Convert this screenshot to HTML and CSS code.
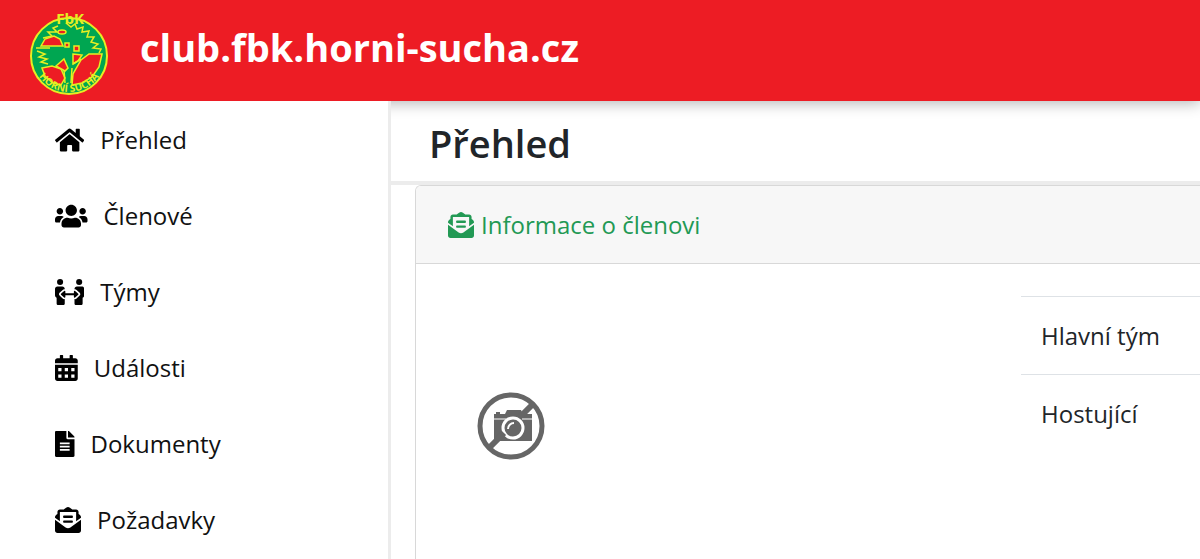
FILE: index.html
```html
<!DOCTYPE html>
<html lang="cs">
<head>
  <meta charset="UTF-8">
  <meta name="viewport" content="width=device-width, initial-scale=1">
  <title>club.fbk.horni-sucha.cz</title>
  <link rel="stylesheet" href="styles.css">
</head>
<body>
  <svg class="sprite" aria-hidden="true">
    <symbol id="envelope" viewBox="0 0 512 512">
      <rect x="160" y="168" width="192" height="48" rx="16"/>
      <rect x="160" y="264" width="192" height="48" rx="16"/>
      <path d="M256 417c-16 0-33-5-47-15L0 251v213c0 26 22 48 48 48h416c26 0 48-22 48-48V251L303 402c-14 10-31 15-47 15zM494 163c-9-7-18-14-30-23V96c0-26-22-48-48-48h-78l-9-7C313 29 279 0 256 0s-56 29-73 41l-9 7H96c-26 0-48 22-48 48v44c-12 9-21 16-30 23A48 48 0 0 0 0 201v10l96 70V96h320v185l96-70v-10c0-15-7-29-18-38z"/>
    </symbol>
  </svg>

  <header class="topbar">
    <svg class="logo" viewBox="0 0 84 90" role="img" aria-label="FbK Horní Suchá">
      <path id="arc" d="M4 47a37 37 0 0 0 74 0" fill="none"/>
      <circle class="green" cx="41" cy="48" r="38"/>
      <g class="red">
        <path d="M13 38l4-7 9-3 6 3 3 7z"/>
        <path d="M14 60l10-2 9 3 4 9-4 7-8-2-8-7z"/>
        <path d="M28 58l8-7 4 9-3 3z"/>
        <path d="M74 46l-3 13-7 10-10 6-10 2 1-11 8-14 8-6z"/>
        <path d="M45 46l9 1-4 6-5 3z"/>
        <path d="M37 35h4v4h-4zM46 38h5v5h-5z"/>
        <ellipse cx="34" cy="24" rx="4" ry="2"/>
      </g>
      <g class="leaves">
        <path d="M38 15l5 4 4-3 2 5 6-2-1 5 7-1-2 6 7 0-3 5 7 2-5 4 8 1-2 4"/>
        <path d="M30 18l-5 2 4 4-9 0 4 4-9 2"/>
        <path d="M8 40h14M9 43l8 3-6 3 8 2-6 3 7 2M45 56l8-5M36 62l1 13M44 60l-1 15"/>
      </g>
      <text class="logo-ring"><textPath href="#arc" startOffset="50%">HORNÍ SUCHÁ</textPath></text>
      <text class="logo-top" x="42" y="16">FbK</text>
    </svg>
    <a class="brand" href="#">club.fbk.horni-sucha.cz</a>
  </header>

  <div class="layout">
    <nav class="sidebar">
      <a href="#">
        <svg class="icon" viewBox="0 0 576 512"><path d="M280 148L96 300v164a16 16 0 0 0 16 16h112a16 16 0 0 0 16-16v-96a16 16 0 0 1 16-16h64a16 16 0 0 1 16 16v96a16 16 0 0 0 16 16h112a16 16 0 0 0 16-16V300L296 148a12 12 0 0 0-16 0zM572 251l-84-68V44a12 12 0 0 0-12-12h-56a12 12 0 0 0-12 12v73l-90-74a48 48 0 0 0-61 0L4 251a12 12 0 0 0-1 17l25 31a12 12 0 0 0 17 2l235-194a12 12 0 0 1 16 0l235 194a12 12 0 0 0 17-2l25-31a12 12 0 0 0-1-17z"/></svg>
        <span>Přehled</span>
      </a>
      <a href="#">
        <svg class="icon" viewBox="0 0 640 512"><path d="M96 224c35 0 64-29 64-64s-29-64-64-64-64 29-64 64 29 64 64 64zm448 0c35 0 64-29 64-64s-29-64-64-64-64 29-64 64 29 64 64 64zm32 32h-64c-18 0-34 7-45 19 40 22 69 62 75 109h66c18 0 32-14 32-32v-32c0-35-29-64-64-64zm-256 0c62 0 112-50 112-112S382 32 320 32 208 82 208 144s50 112 112 112zm77 32h-8c-21 10-44 16-69 16s-48-6-69-16h-8c-63 0-115 52-115 115v29c0 26 22 48 48 48h288c26 0 48-22 48-48v-29c0-63-52-115-115-115zm-224-13c-11-12-27-19-45-19H64c-35 0-64 29-64 64v32c0 18 14 32 32 32h66c6-47 35-87 75-109z"/></svg>
        <span>Členové</span>
      </a>
      <a href="#">
        <svg class="icon" viewBox="0 0 576 512">
          <circle cx="100" cy="60" r="60"/>
          <circle cx="476" cy="60" r="60"/>
          <path d="M48 148h96c27 0 48 21 48 48v8c-14-4-30 0-41 11l-61 58c-16 15-16 39 0 54l61 58c11 11 27 15 41 11v84c0 18-14 32-32 32H64c-18 0-32-14-32-32V368c-20-10-32-26-32-48V196c0-27 21-48 48-48z"/>
          <path d="M528 148h-96c-27 0-48 21-48 48v8c14-4 30 0 41 11l61 58c16 15 16 39 0 54l-61 58c-11 11-27 15-41 11v84c0 18 14 32 32 32h96c18 0 32-14 32-32V368c20-10 32-26 32-48V196c0-27-21-48-48-48z"/>
          <path d="M118 291l62-56c10-9 24-3 24 10v34h168v-34c0-13 14-19 24-10l62 56c5 5 5 13 0 18l-62 56c-10 9-24 3-24-10v-34H204v34c0 13-14 19-24 10l-62-56c-5-5-5-13 0-18z"/>
        </svg>
        <span>Týmy</span>
      </a>
      <a href="#">
        <svg class="icon" viewBox="0 0 448 512"><path fill-rule="evenodd" d="M0 192h448v272c0 26-22 48-48 48H48c-26 0-48-22-48-48zM64 256v64h64v-64zm128 0v64h64v-64zm128 0v64h64v-64zM64 384v64h64v-64zm128 0v64h64v-64zm128 0v64h64v-64zM448 112v48H0v-48c0-26 22-48 48-48h48V12c0-7 5-12 12-12h40c7 0 12 5 12 12v52h128V12c0-7 5-12 12-12h40c7 0 12 5 12 12v52h48c26 0 48 22 48 48z"/></svg>
        <span>Události</span>
      </a>
      <a href="#">
        <svg class="icon" viewBox="0 0 384 512"><path fill-rule="evenodd" d="M224 136V0H24C11 0 0 11 0 24v464c0 13 11 24 24 24h336c13 0 24-11 24-24V160H248c-13 0-24-11-24-24zM96 224h192v36H96zm0 64h192v36H96zm0 64h192v36H96zM384 122v6H256V0h6c6 0 12 2 17 7l98 98c5 5 7 11 7 17z"/></svg>
        <span>Dokumenty</span>
      </a>
      <a href="#">
        <svg class="icon" viewBox="0 0 512 512"><use href="#envelope"/></svg>
        <span>Požadavky</span>
      </a>
    </nav>

    <main class="content">
      <div class="page-title">
        <h1>Přehled</h1>
      </div>
      <section class="card">
        <h2 class="card-header">
          <svg class="icon" viewBox="0 0 512 512"><use href="#envelope"/></svg>
          <span>Informace o členovi</span>
        </h2>
        <div class="card-body">
          <svg class="photo" viewBox="0 0 68 68" role="img" aria-label="Bez fotografie">
            <path fill="#666" d="M17 25v-3h2v-2h4v2h5l2-4h14l2 4h9v27H17z"/>
            <path d="M17 27h12M45 27h10" stroke="#fff"/>
            <circle cx="36" cy="36" r="10" fill="#666" stroke="#fff" stroke-width="3"/>
            <path d="M12 56L27 41M44 24L56 12" stroke="#666" stroke-width="6"/>
            <path d="M31 37a6 6 0 0 1 6-6" fill="none" stroke="#fff" stroke-width="2"/>
            <circle cx="34" cy="34" r="31" fill="none" stroke="#666" stroke-width="5"/>
          </svg>
          <table class="info">
            <tbody>
              <tr><th scope="row">Hlavní tým</th></tr>
              <tr><th scope="row">Hostující</th></tr>
            </tbody>
          </table>
        </div>
      </section>
    </main>
  </div>
</body>
</html>
```
FILE: styles.css
```css
* {
  box-sizing: border-box;
}

body {
  margin: 0;
  min-height: 100vh;
  display: flex;
  flex-direction: column;
  background: #fff;
  color: #212529;
  font-family: "Segoe UI", "Open Sans", sans-serif;
  font-size: 24px;
  line-height: 36px;
}

a {
  color: inherit;
  text-decoration: none;
}

.sprite {
  display: none;
}

.icon {
  height: 26px;
  flex: none;
  fill: currentColor;
}

/* header */
.topbar {
  display: flex;
  align-items: center;
  gap: 28px;
  padding: 8px 28px 3px;
  background: #ed1c24;
  color: #fff;
  box-shadow: 0 2px 14px rgba(0, 0, 0, 0.3);
}

.logo {
  width: 84px;
  height: 90px;
  overflow: visible;
}

.green {
  fill: #00a651;
  stroke: #e6ee22;
  stroke-width: 2;
}

.red {
  fill: #ed1c24;
  stroke: #e6ee22;
  stroke-width: 1.5;
}

.leaves {
  fill: none;
  stroke: #e6ee22;
  stroke-width: 1.5;
}

.logo-top,
.logo-ring {
  font-family: "Open Sans", sans-serif;
  font-weight: bold;
  text-anchor: middle;
  fill: #e6ee22;
}

.logo-top {
  font-size: 15px;
}

.logo-ring {
  font-size: 10px;
}

.brand {
  font-size: 38px;
  line-height: 48px;
  font-weight: bold;
  padding-bottom: 12px;
}

/* layout */
.layout {
  flex: 1;
  display: flex;
}

.sidebar {
  position: relative;
  width: 391px;
  flex: none;
  display: flex;
  flex-direction: column;
  gap: 40px;
  padding: 21px 55px 0;
  background: #fff;
  border-right: 3px solid #ececec;
  color: #111;
}

.sidebar .icon {
  fill: #000;
}

.sidebar a {
  display: flex;
  align-items: center;
  gap: 16px;
}

.content {
  flex: 1;
  min-width: 0;
  display: flex;
  flex-direction: column;
}

.page-title {
  padding: 18px 38px 14px;
  border-bottom: 4px solid #ececec;
}

.page-title h1 {
  margin: 0;
  font-size: 38px;
  line-height: 48px;
  font-weight: 600;
}

/* card */
.card {
  flex: 1;
  margin-left: 24px;
  border: solid #d8d8d8;
  border-width: 1px 0 0 1px;
  border-top-left-radius: 6px;
}

.card-header {
  display: flex;
  align-items: center;
  gap: 7px;
  margin: 0;
  padding: 21px 32px 20px;
  background: #f7f7f7;
  border-bottom: 1px solid #d8d8d8;
  border-top-left-radius: 5px;
  color: #229954;
  font-size: 24px;
  font-weight: normal;
}

.card-body {
  display: grid;
  grid-template-columns: minmax(200px, 573px) 1fr;
  align-items: start;
  padding: 32px 0 32px 32px;
}

.photo {
  width: 68px;
  height: 68px;
  margin: 96px 0 0 29px;
}

.info {
  width: 100%;
  border-collapse: collapse;
}

.info tr {
  height: 78px;
}

.info th {
  padding: 20px;
  border-top: 1px solid #dee2e6;
  font-weight: normal;
  text-align: left;
}
```
